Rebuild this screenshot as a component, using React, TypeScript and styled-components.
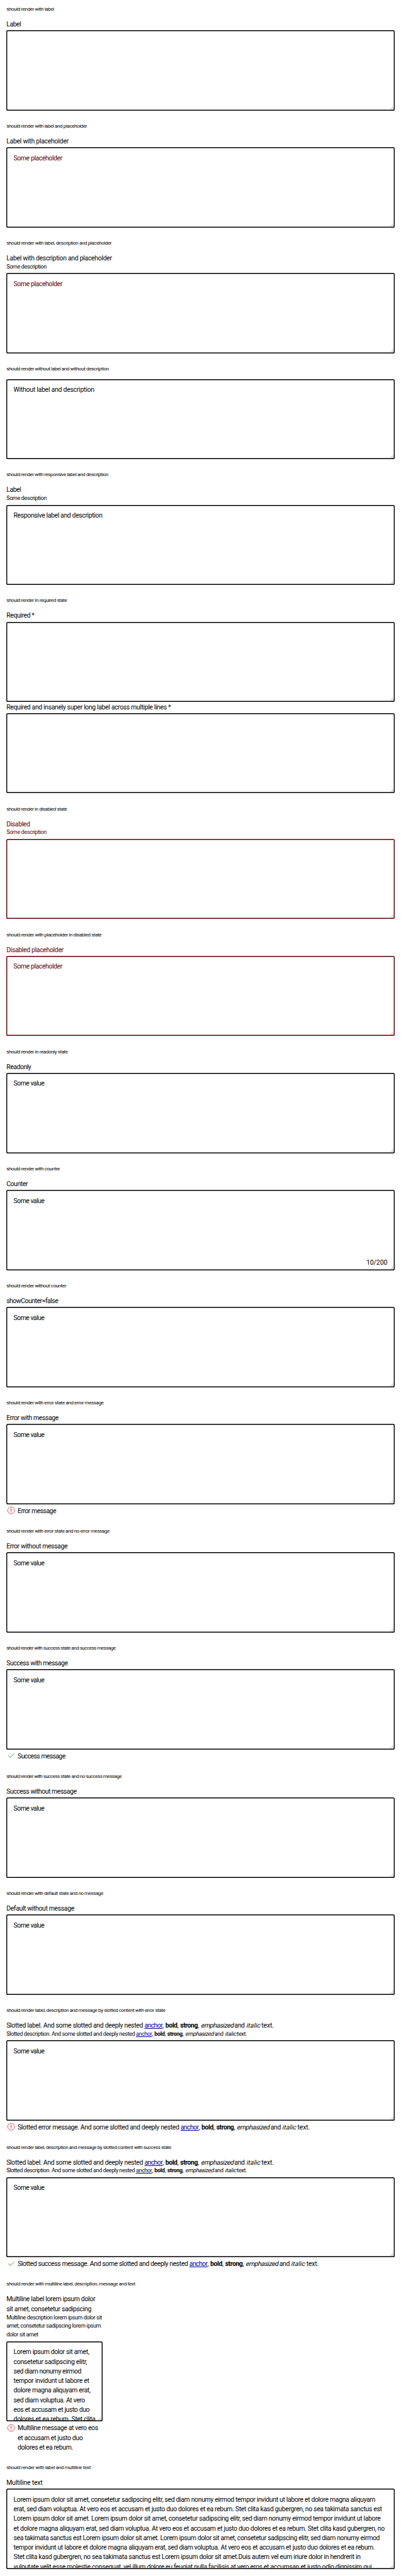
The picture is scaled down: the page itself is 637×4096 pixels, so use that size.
import React, { useLayoutEffect, useRef } from 'react';
import styled, { createGlobalStyle, css } from 'styled-components';

const SCALE = 0.6373;
const u = (n: number) => `${+(n * SCALE).toFixed(4)}px`;

const ink = '#000';
const muted = '#600000';

const GlobalStyle = createGlobalStyle`
  html, body { margin: 0; padding: 0; background: #fff; }
  body { overflow: hidden; }
  *, *::before, *::after { box-sizing: border-box; }
`;

const Page = styled.main`
  width: 637px;
  padding: 0 ${u(16)};
  font-family: Roboto, 'Liberation Sans', sans-serif;
  color: ${ink};
  background: #fff;
`;

const Story = styled.section`
  display: flex;
  flex-direction: column;
  padding-bottom: ${u(16)};
`;

const StoryTitle = styled.p`
  margin: 0;
  height: ${u(48)};
  line-height: ${u(48)};
  font-size: ${u(12.6)};
`;

const FieldGroup = styled.div<{ $width?: number; $muted?: boolean }>`
  display: flex;
  flex-direction: column;
  ${(p) => p.$width && css`width: ${u(p.$width)};`}
  ${(p) => p.$muted && css`color: ${muted};`}
`;

const TextRows = styled.span<{ $small?: boolean }>`
  display: flex;
  flex-direction: column;
  align-items: flex-start;
  ${(p) =>
    p.$small
      ? css`
          font-size: ${u(14.2)};
          line-height: ${u(21.8)};
        `
      : css`
          font-size: ${u(16.4)};
          line-height: ${u(24)};
          padding-top: ${u(0.8)};
          margin-bottom: ${u(-0.8)};
        `}
`;

const LabelBlock = styled.label`
  display: flex;
  flex-direction: column;
  margin-bottom: ${u(4)};
`;

const TextBox = styled.div<{ $muted?: boolean }>`
  position: relative;
  height: ${u(200)};
  padding: ${u(2)};
  border-radius: ${u(4)};
  box-shadow: inset 0 0 0 1.45px ${(p) => (p.$muted ? muted : ink)};
`;

const TextContent = styled.div<{ $muted?: boolean }>`
  height: 100%;
  padding: ${u(12)} ${u(15.8)};
  overflow: hidden;
  color: ${(p) => (p.$muted ? muted : ink)};
`;

const Counter = styled.span`
  position: absolute;
  right: ${u(18)};
  bottom: ${u(6)};
  font-size: ${u(16.4)};
  line-height: ${u(24)};
`;

const Grip = styled.svg`
  position: absolute;
  right: ${u(2)};
  bottom: ${u(2)};
  width: ${u(9)};
  height: ${u(9)};
`;

const MessageRow = styled.div`
  display: flex;
  align-items: flex-start;
  gap: ${u(4)};
  padding-top: ${u(4)};
`;

const StateIcon = styled.svg`
  flex: none;
  width: ${u(24)};
  height: ${u(24)};
`;

const Row = styled.span`
  display: flex;
  white-space: pre;
`;

const Tracked = styled.span`
  display: inline-block;
  white-space: pre;
  text-decoration: inherit;
`;

const Slanted = styled.em`
  display: inline-block;
  font-style: normal;
  transform: skewX(-12deg);
  transform-origin: 50% 75%;
`;

const Anchor = styled.a`
  color: #00009f;
  text-decoration: underline;
`;

/* A run of text whose tracking is adjusted so that it takes up the given width. */
const Run = ({ w, children }: { w: number; children: string }) => {
  const ref = useRef<HTMLSpanElement>(null);
  useLayoutEffect(() => {
    const el = ref.current;
    if (!el) return;
    el.style.letterSpacing = '0px';
    const natural = parseFloat(getComputedStyle(el).width);
    el.style.letterSpacing = `${(w * SCALE - natural) / children.length}px`;
  }, [w, children]);
  return <Tracked ref={ref}>{children}</Tracked>;
};

type Line = [string, number];

const Lines = ({ lines, small }: { lines: Line[]; small?: boolean }) => (
  <TextRows $small={small}>
    {lines.map(([text, w]) => (
      <Run key={text} w={w}>{text}</Run>
    ))}
  </TextRows>
);

type RichWidths = number[];
const rich16: RichWidths = [45, 7.3, 29.5, 7.5, 43.5, 7, 81, 32.5, 34.5, 34.5];
const rich14: RichWidths = [40, 6, 25.5, 6.5, 38, 6.5, 70.5, 27.5, 28, 28];

const RichLine = ({ lead, widths }: { lead: Line; widths: RichWidths }) => (
  <Row>
    <Run w={lead[1]}>{lead[0]}</Run>
    <Anchor><Run w={widths[0]}>anchor</Run></Anchor>
    <Run w={widths[1]}>{', '}</Run>
    <b><Run w={widths[2]}>bold</Run></b>
    <Run w={widths[3]}>{', '}</Run>
    <strong><Run w={widths[4]}>strong</Run></strong>
    <Run w={widths[5]}>{', '}</Run>
    <Slanted><Run w={widths[6]}>emphasized</Run></Slanted>
    <Run w={widths[7]}>{' and '}</Run>
    <Slanted as="i"><Run w={widths[8]}>italic</Run></Slanted>
    <Run w={widths[9]}>{' text.'}</Run>
  </Row>
);

const ErrorIcon = () => (
  <StateIcon viewBox="0 0 24 24" fill="none">
    <circle cx="12" cy="12" r="8.5" stroke="#d5001c" strokeWidth="1.1" />
    <path d="M12 7.4v6" stroke="#d5001c" strokeWidth="1.7" />
    <path d="M12 14.8v1.7" stroke="#d5001c" strokeWidth="1.7" />
  </StateIcon>
);

const SuccessIcon = () => (
  <StateIcon viewBox="0 0 24 24" fill="none">
    <path d="M5.2 11.6l4.7 4.9L19.8 6.6" stroke="#018a16" strokeWidth="1.3" />
  </StateIcon>
);

type FieldProps = {
  label?: Line[];
  slotted?: Line;
  description?: Line[];
  slottedDescription?: Line;
  value?: Line[];
  placeholder?: boolean;
  disabled?: boolean;
  counter?: string;
  width?: number;
  state?: 'error' | 'success';
  message?: Line[];
  slottedMessage?: Line;
};

const Field = (p: FieldProps) => (
  <FieldGroup $width={p.width} $muted={p.disabled}>
    {(p.label || p.slotted) && (
      <LabelBlock>
        {p.label && <Lines lines={p.label} />}
        {p.slotted && (
          <TextRows><RichLine lead={p.slotted} widths={rich16} /></TextRows>
        )}
        {p.description && <Lines lines={p.description} small />}
        {p.slottedDescription && (
          <TextRows $small><RichLine lead={p.slottedDescription} widths={rich14} /></TextRows>
        )}
      </LabelBlock>
    )}
    <TextBox $muted={p.disabled}>
      <TextContent $muted={p.placeholder}>{p.value && <Lines lines={p.value} />}</TextContent>
      {p.counter && <Counter><Run w={52.5}>{p.counter}</Run></Counter>}
      <Grip viewBox="0 0 9 9" fill="none" stroke="#555" strokeWidth="0.8">
        <path d="M1 7.6L7.7 0.9M4.9 7.6L7.7 4.8" />
      </Grip>
    </TextBox>
    {(p.message || p.slottedMessage) && (
      <MessageRow>
        {p.state === 'error' ? <ErrorIcon /> : <SuccessIcon />}
        {p.message && <Lines lines={p.message} />}
        {p.slottedMessage && (
          <TextRows><RichLine lead={p.slottedMessage} widths={rich16} /></TextRows>
        )}
      </MessageRow>
    )}
  </FieldGroup>
);

const someValue: Line[] = [['Some value', 76.6]];
const somePlaceholder: Line[] = [['Some placeholder', 121.3]];
const someDescription: Line[] = [['Some description', 100]];

const stories: { title: Line; fields: FieldProps[] }[] = [
  { title: ['should render with label', 118.6], fields: [{ label: [['Label', 36.3]] }] },
  {
    title: ['should render with label and placeholder', 200.8],
    fields: [{ label: [['Label with placeholder', 154.6]], value: somePlaceholder, placeholder: true }],
  },
  {
    title: ['should render with label, description and placeholder', 262],
    fields: [{
      label: [['Label with description and placeholder', 263]],
      description: someDescription,
      value: somePlaceholder,
      placeholder: true,
    }],
  },
  {
    title: ['should render without label and without description', 255],
    fields: [{ value: [['Without label and description', 201.2]] }],
  },
  {
    title: ['should render with responsive label and description', 254],
    fields: [{
      label: [['Label', 36.3]],
      description: someDescription,
      value: [['Responsive label and description', 221.3]],
    }],
  },
  {
    title: ['should render in required state', 151],
    fields: [
      { label: [['Required *', 69.5]] },
      { label: [['Required and insanely super long label across multiple lines *', 409.4]] },
    ],
  },
  {
    title: ['should render in disabled state', 151],
    fields: [{ label: [['Disabled', 58.6]], description: someDescription, disabled: true }],
  },
  {
    title: ['should render with placeholder in disabled state', 237],
    fields: [{ label: [['Disabled placeholder', 142.2]], value: somePlaceholder, placeholder: true, disabled: true }],
  },
  { title: ['should render in readonly state', 153], fields: [{ label: [['Readonly', 61.5]], value: someValue }] },
  {
    title: ['should render with counter', 133.2],
    fields: [{ label: [['Counter', 52.9]], value: someValue, counter: '10/200' }],
  },
  {
    title: ['should render without counter', 149.2],
    fields: [{ label: [['showCounter=false', 128.8]], value: someValue }],
  },
  {
    title: ['should render with error state and error message', 242],
    fields: [{
      label: [['Error with message', 129.7]],
      value: someValue,
      state: 'error',
      message: [['Error message', 95.7]],
    }],
  },
  {
    title: ['should render with error state and no error message', 256.6],
    fields: [{ label: [['Error without message', 152]], value: someValue }],
  },
  {
    title: ['should render with success state and success message', 272],
    fields: [{
      label: [['Success with message', 152.7]],
      value: someValue,
      state: 'success',
      message: [['Success message', 118.6]],
    }],
  },
  {
    title: ['should render with success state and no success message', 287],
    fields: [{ label: [['Success without message', 174.7]], value: someValue }],
  },
  {
    title: ['should render with default state and no message', 241],
    fields: [{ label: [['Default without message', 169]], value: someValue }],
  },
  {
    title: ['should render label, description and message by slotted content with error state', 396],
    fields: [{
      slotted: ['Slotted label. And some slotted and deeply nested ', 344],
      slottedDescription: ['Slotted description. And some slotted and deeply nested ', 323],
      value: someValue,
      state: 'error',
      slottedMessage: ['Slotted error message. And some slotted and deeply nested ', 406],
    }],
  },
  {
    title: ['should render label, description and message by slotted content with success state', 410.7],
    fields: [{
      slotted: ['Slotted label. And some slotted and deeply nested ', 344],
      slottedDescription: ['Slotted description. And some slotted and deeply nested ', 323],
      value: someValue,
      state: 'success',
      slottedMessage: ['Slotted success message. And some slotted and deeply nested ', 428],
    }],
  },
  {
    title: ['should render with multiline label, description, message and text', 321],
    fields: [{
      width: 240,
      label: [['Multiline label lorem ipsum dolor', 221.2], ['sit amet, consetetur sadipscing', 211.4]],
      description: [
        ['Multiline description lorem ipsum dolor sit', 237.8],
        ['amet, consetetur sadipscing lorem ipsum', 235.3],
        ['dolor sit amet', 79],
      ],
      value: [
        ['Lorem ipsum dolor sit amet,', 188.3],
        ['consetetur sadipscing elitr,', 183],
        ['sed diam nonumy eirmod', 168.5],
        ['tempor invidunt ut labore et', 188.6],
        ['dolore magna aliquyam erat,', 191.5],
        ['sed diam voluptua. At vero', 178],
        ['eos et accusam et justo duo', 189.2],
        ['dolores et ea rebum. Stet clita', 204],
      ],
      state: 'error',
      message: [
        ['Multiline message at vero eos', 200.3],
        ['et accusam et justo duo', 162],
        ['dolores et ea rebum.', 137.8],
      ],
    }],
  },
  {
    title: ['should render with label and multiline text', 210],
    fields: [{
      label: [['Multiline text', 89.9]],
      value: [
        ['Lorem ipsum dolor sit amet, consetetur sadipscing elitr, sed diam nonumy eirmod tempor invidunt ut labore et dolore magna aliquyam', 901.6],
        ['erat, sed diam voluptua. At vero eos et accusam et justo duo dolores et ea rebum. Stet clita kasd gubergren, no sea takimata sanctus est', 918],
        ['Lorem ipsum dolor sit amet. Lorem ipsum dolor sit amet, consetetur sadipscing elitr, sed diam nonumy eirmod tempor invidunt ut labore', 914.7],
        ['et dolore magna aliquyam erat, sed diam voluptua. At vero eos et accusam et justo duo dolores et ea rebum. Stet clita kasd gubergren, no', 924.6],
        ['sea takimata sanctus est Lorem ipsum dolor sit amet. Lorem ipsum dolor sit amet, consetetur sadipscing elitr, sed diam nonumy eirmod', 912.5],
        ['tempor invidunt ut labore et dolore magna aliquyam erat, sed diam voluptua. At vero eos et accusam et justo duo dolores et ea rebum.', 900.3],
        ['Stet clita kasd gubergren, no sea takimata sanctus est Lorem ipsum dolor sit amet.Duis autem vel eum iriure dolor in hendrerit in', 865],
        ['vulputate velit esse molestie consequat, vel illum dolore eu feugiat nulla facilisis at vero eros et accumsan et iusto odio dignissim qui', 892.7],
      ],
    }],
  },
];

export default function App() {
  return (
    <>
      <GlobalStyle />
      <Page>
        {stories.map((story) => (
          <Story key={story.title[0]}>
            <StoryTitle><Run w={story.title[1]}>{story.title[0]}</Run></StoryTitle>
            {story.fields.map((field, i) => (
              <Field key={i} {...field} />
            ))}
          </Story>
        ))}
      </Page>
    </>
  );
}
